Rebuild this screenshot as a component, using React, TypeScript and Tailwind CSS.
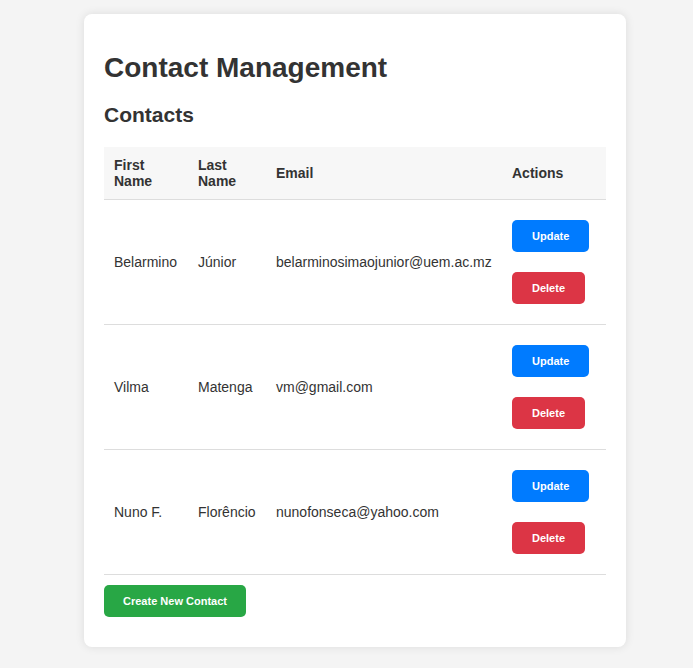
import React from "react";

const contacts = [
  { first: "Belarmino", last: "Júnior", email: "belarminosimaojunior@uem.ac.mz" },
  { first: "Vilma", last: "Matenga", email: "vm@gmail.com" },
  { first: "Nuno F.", last: "Florêncio", email: "nunofonseca@yahoo.com" },
];

export default function App() {
  return (
    <div
      className="min-h-[668px] bg-[#f4f4f4] pt-[14px] pb-[22px] text-[#333]"
      style={{ fontFamily: '"Liberation Sans", Arial, sans-serif' }}
    >
      <div className="ml-[84px] w-[542px] rounded-[8px] bg-white px-5 pt-[38px] pb-[30px] shadow-[0_0_10px_rgba(0,0,0,0.1)]">
        <h1 className="text-[28px] leading-[32px] font-bold">Contact Management</h1>
        <h2 className="mt-[19px] text-[21px] leading-[24px] font-bold">Contacts</h2>
        <table className="mt-[20px] w-full border-collapse text-[14px] leading-[16px]">
          <thead>
            <tr className="bg-[#f7f7f7] border-b border-[#ddd]">
              <th className="w-[84px] p-[10px] text-left align-middle font-bold">First Name</th>
              <th className="w-[78px] p-[10px] text-left align-middle font-bold">Last Name</th>
              <th className="p-[10px] text-left align-middle font-bold">Email</th>
              <th className="w-[104px] p-[10px] text-left align-middle font-bold">Actions</th>
            </tr>
          </thead>
          <tbody>
            {contacts.map((c) => (
              <tr key={c.email} className="border-b border-[#ddd]">
                <td className="p-[10px] align-middle">{c.first}</td>
                <td className="p-[10px] align-middle">{c.last}</td>
                <td className="p-[10px] align-middle">{c.email}</td>
                <td className="p-[10px] align-middle">
                  <div className="flex flex-col items-start gap-5 py-[10px]">
                    <button className="rounded-[5px] bg-[#007bff] px-5 py-[10px] text-[11px] leading-[12px] font-bold text-white">
                      Update
                    </button>
                    <button className="rounded-[5px] bg-[#dc3545] px-5 py-[10px] text-[11px] leading-[12px] font-bold text-white">
                      Delete
                    </button>
                  </div>
                </td>
              </tr>
            ))}
          </tbody>
        </table>
        <button className="mt-[10px] w-[142px] rounded-[5px] bg-[#28a745] py-[10px] text-center text-[11px] leading-[12px] font-bold text-white">
          Create New Contact
        </button>
      </div>
    </div>
  );
}
